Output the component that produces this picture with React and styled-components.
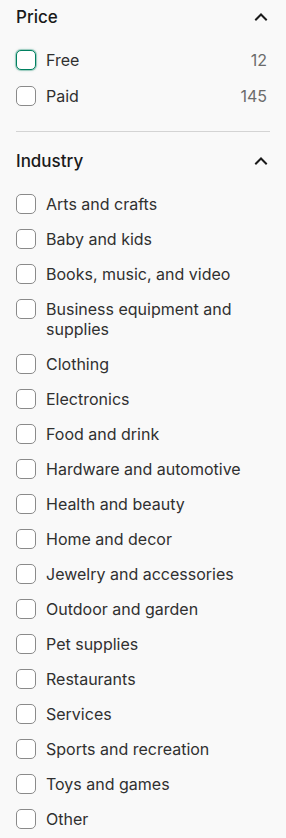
import styled, { createGlobalStyle } from 'styled-components';

const GlobalStyle = createGlobalStyle`
body{
    margin: 0;
    background: #f9f9f9;
    font-family: Inter, "Noto Sans", sans-serif;
    color: #303030;
}
`;

const industries = [
    'Arts and crafts',
    'Baby and kids',
    'Books, music, and video',
    'Business equipment and supplies',
    'Clothing',
    'Electronics',
    'Food and drink',
    'Hardware and automotive',
    'Health and beauty',
    'Home and decor',
    'Jewelry and accessories',
    'Outdoor and garden',
    'Pet supplies',
    'Restaurants',
    'Services',
    'Sports and recreation',
    'Toys and games',
    'Other',
];

function Chevron()
{
    return(
        <svg width="14" height="14" viewBox="0 0 14 14" fill="none">
            <path d="M2 9.5L7 4.5L12 9.5" stroke="#1a1a1a" strokeWidth="2" strokeLinecap="square" />
        </svg>
    )
}

function Option({ label, count, focused })
{
    return(
        <Row>
            <Box $focused={focused} />
            <Label>{label}</Label>
            {count !== undefined && <Count>{count}</Count>}
        </Row>
    )
}

function App()
{
    return(
        <Sidebar>
            <GlobalStyle />
            <Section>
                <Header>
                    <Title>Price</Title>
                    <Chevron />
                </Header>
                <List $gap="16px">
                    <Option label="Free" count={12} focused />
                    <Option label="Paid" count={145} />
                </List>
            </Section>
            <Divider />
            <Section>
                <Header>
                    <Title>Industry</Title>
                    <Chevron />
                </Header>
                <List $gap="15px">
                    {industries.map(name => <Option key={name} label={name} />)}
                </List>
            </Section>
        </Sidebar>
    )
}

export default App;

const Sidebar = styled.div`
width: 286px;
padding: 4px 16px 0 16px;
box-sizing: border-box;
`;

const Section = styled.div`
display: flex;
flex-direction: column;
`;

const Header = styled.div`
display: flex;
align-items: center;
justify-content: space-between;
height: 26px;
padding-right: 2px;
margin-bottom: 20px;
`;

const Title = styled.div`
font-size: 17px;
font-weight: 500;
color: #1a1a1a;
`;

const List = styled.div`
display: flex;
flex-direction: column;
gap: ${p => p.$gap};
`;

const Row = styled.label`
display: flex;
align-items: flex-start;
gap: 10px;
font-size: 16px;
line-height: 20px;
cursor: pointer;
`;

const Box = styled.span`
flex: none;
width: 20px;
height: 20px;
box-sizing: border-box;
border-radius: 5px;
background: #fff;
border: 1px solid ${p => p.$focused ? '#008060' : '#8a8a8a'};
box-shadow: ${p => p.$focused ? '0 0 0 1px rgba(0,128,96,0.25), 0 0 3px rgba(0,128,96,0.4)' : 'none'};
`;

const Label = styled.span`
flex: 1;
`;

const Count = styled.span`
color: #6b6b6b;
padding-right: 3px;
`;

const Divider = styled.div`
height: 1px;
background: #d4d4d4;
margin: 25px 0 16px 0;
`;
